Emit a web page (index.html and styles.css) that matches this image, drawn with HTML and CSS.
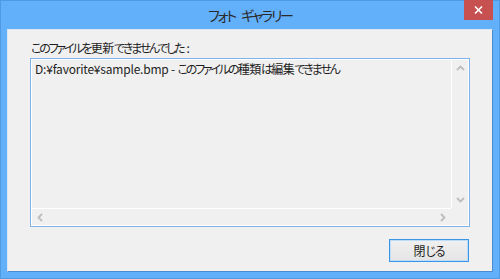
FILE: index.html
```html
<!DOCTYPE html>
<html lang="ja">
<head>
<meta charset="utf-8">
<title>フォト ギャラリー</title>
<link rel="stylesheet" href="styles.css">
</head>
<body>
<div class="window">
  <div class="titlebar">
    <span class="title">フォト ギャラリー</span>
    <div class="close">
      <svg width="9" height="8" viewBox="0 0 9 8"><path d="M1 0.5 L8 7.5 M8 0.5 L1 7.5" stroke="#fff" stroke-width="1.6" fill="none"/></svg>
    </div>
  </div>
  <div class="client">
    <div class="label">このファイルを<span class="k">更新</span>できませんでした<span class="colon">:</span></div>
    <div class="listbox">
      <div class="content"><span class="latin">D:¥favorite¥sample.bmp - </span><span class="jp">このファイルの<span class="k">種類</span>は<span class="k">編集</span>できません</span></div>
      <div class="vscroll">
        <svg class="chev" width="9" height="6" viewBox="0 0 9 6"><path d="M1 5 L4.5 1.5 L8 5" stroke="#bdbdbd" stroke-width="1.8" fill="none"/></svg>
        <svg class="chev" width="9" height="6" viewBox="0 0 9 6"><path d="M1 1 L4.5 4.5 L8 1" stroke="#bdbdbd" stroke-width="1.8" fill="none"/></svg>
      </div>
      <div class="hscroll">
        <svg class="chev" width="6" height="9" viewBox="0 0 6 9"><path d="M5 1 L1.5 4.5 L5 8" stroke="#bdbdbd" stroke-width="1.8" fill="none"/></svg>
        <svg class="chev" width="6" height="9" viewBox="0 0 6 9"><path d="M1 1 L4.5 4.5 L1 8" stroke="#bdbdbd" stroke-width="1.8" fill="none"/></svg>
      </div>
      <div class="corner"></div>
    </div>
    <div class="buttons">
      <button class="btn"><span class="k">閉</span>じる</button>
    </div>
  </div>
</div>
</body>
</html>
```
FILE: styles.css
```css
html, body {
  margin: 0;
  padding: 0;
  background: #63b0fa;
}
body {
  font-family: "Noto Sans CJK JP", "Noto Sans", sans-serif;
  font-feature-settings: "palt";
  color: #1e1e1e;
}
.window {
  width: 500px;
  height: 279px;
  box-sizing: border-box;
  border: 1px solid #4f9ae0;
  background: #63b0fa;
  display: flex;
  flex-direction: column;
}
.titlebar {
  height: 28px;
  position: relative;
  display: flex;
  align-items: center;
  justify-content: center;
}
.title {
  font-size: 14px;
  letter-spacing: -2.2px;
  word-spacing: 5px;
  color: #2a2a2a;
  margin-top: -1px;
}
.close {
  position: absolute;
  top: -1px;
  right: 6px;
  width: 29px;
  height: 20px;
  background: #c75050;
  display: flex;
  align-items: center;
  justify-content: center;
}
.client {
  margin: 0 6px 6px 6px;
  flex: 1;
  background: #f0f0f0;
  border: 1px solid #4a8bd0;
  border-top-color: #d9e6f3;
  border-left-color: #d9e6f3;
  padding: 10px 22px 0 22px;
  display: flex;
  flex-direction: column;
}
.label {
  font-size: 12px;
  letter-spacing: -2.2px;
  line-height: 16px;
  height: 18px;
  padding-left: 1px;
}
.k {
  letter-spacing: -0.4px;
  margin-left: 0.5px;
}
.colon {
  letter-spacing: 0;
  margin-left: 3px;
}
.listbox {
  height: 169px;
  box-sizing: border-box;
  border: 1px solid #7eb4ea;
  box-shadow: inset 0 0 0 1px #ffffff;
  display: grid;
  grid-template-columns: 1fr 17px;
  grid-template-rows: 1fr 17px;
  padding: 1px;
}
.content {
  font-size: 12px;
  line-height: 16px;
  padding: 1px 3px;
  white-space: nowrap;
}
.latin {
  letter-spacing: -0.2px;
}
.jp {
  letter-spacing: -2.2px;
}
.vscroll {
  border-left: 1px solid #ffffff;
  display: flex;
  flex-direction: column;
  justify-content: space-between;
  align-items: center;
  padding: 5px 0 5px;
}
.hscroll {
  border-top: 1px solid #ffffff;
  display: flex;
  justify-content: space-between;
  align-items: center;
  padding: 0 5px 0 5px;
}
.corner {
  background: #f0f0f0;
}
.buttons {
  display: flex;
  justify-content: flex-end;
  margin-top: 12px;
}
.btn {
  width: 80px;
  height: 23px;
  box-sizing: border-box;
  border: 1px solid #3c96e6;
  box-shadow: inset 0 0 0 1px #bcdcf7;
  background: linear-gradient(#f0f0f0, #e5e5e5);
  font-family: "Noto Sans CJK JP", "Noto Sans", sans-serif;
  font-feature-settings: "palt";
  font-size: 12px;
  letter-spacing: -1.2px;
  color: #1e1e1e;
  padding: 0;
  margin-right: 1px;
}
.btn .k {
  letter-spacing: 0;
  margin-left: 0;
}
```
